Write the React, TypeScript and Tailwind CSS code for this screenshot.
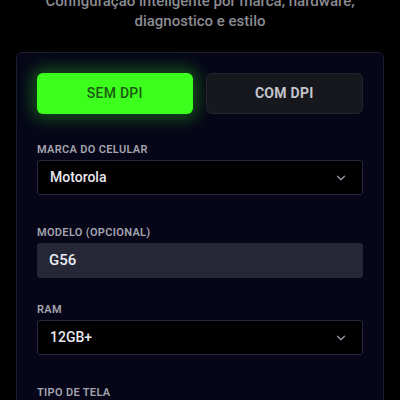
import React from 'react';
import { ChevronDown } from 'lucide-react';

const Label: React.FC<{ children: React.ReactNode }> = ({ children }) => (
  <div className="text-[11px] leading-[14px] font-semibold tracking-[0.03em] text-[#a3a4ae] mb-[3px]">{children}</div>
);

const SelectBox: React.FC<{ value: string }> = ({ value }) => (
  <div className="h-[35px] flex items-center justify-between px-3 bg-black border border-[#262838] rounded-[3px]">
    <span className="text-[14px] font-medium text-[#e8e8ee]">{value}</span>
    <ChevronDown size={14} strokeWidth={2.2} className="text-[#9a9aa5] mr-[2px]" />
  </div>
);

export default function App() {
  return (
    <div
      className="w-[400px] h-[400px] overflow-hidden bg-black"
      style={{ fontFamily: 'Roboto, "Noto Sans", sans-serif' }}
    >
      <p className="mt-[-9px] text-center text-[15px] leading-[20px] text-[#8b8b92] font-medium">
        Configuração inteligente por marca, hardware,
        <br />
        diagnostico e estilo
      </p>

      <div className="mx-[16px] mt-[21px] bg-[#060618] border border-[#1c1e2c] rounded-[6px] px-[20px] pt-[20px] pb-6">
        <div className="flex gap-[13px]">
          <button className="flex-1 h-[41px] rounded-[6px] bg-[#3cff1e] text-[#1d5a12] text-[14px] font-medium tracking-[0.02em] shadow-[0_0_16px_5px_rgba(60,255,30,0.3)]">
            SEM DPI
          </button>
          <button className="flex-1 h-[41px] rounded-[6px] bg-[#17171e] border border-[#24242e] text-[#c4c4cc] text-[14px] font-bold tracking-[0.02em]">
            COM DPI
          </button>
        </div>

        <div className="mt-[29px]">
          <Label>MARCA DO CELULAR</Label>
          <SelectBox value="Motorola" />
        </div>

        <div className="mt-[31px]">
          <Label>MODELO (OPCIONAL)</Label>
          <div className="h-[35px] flex items-center px-3 bg-[#252736] rounded-[3px]">
            <span className="text-[15px] font-medium text-[#ececf2]">G56</span>
          </div>
        </div>

        <div className="mt-[25px]">
          <Label>RAM</Label>
          <SelectBox value="12GB+" />
        </div>

        <div className="mt-[31px]">
          <Label>TIPO DE TELA</Label>
          <SelectBox value="OLED" />
        </div>
      </div>
    </div>
  );
}
